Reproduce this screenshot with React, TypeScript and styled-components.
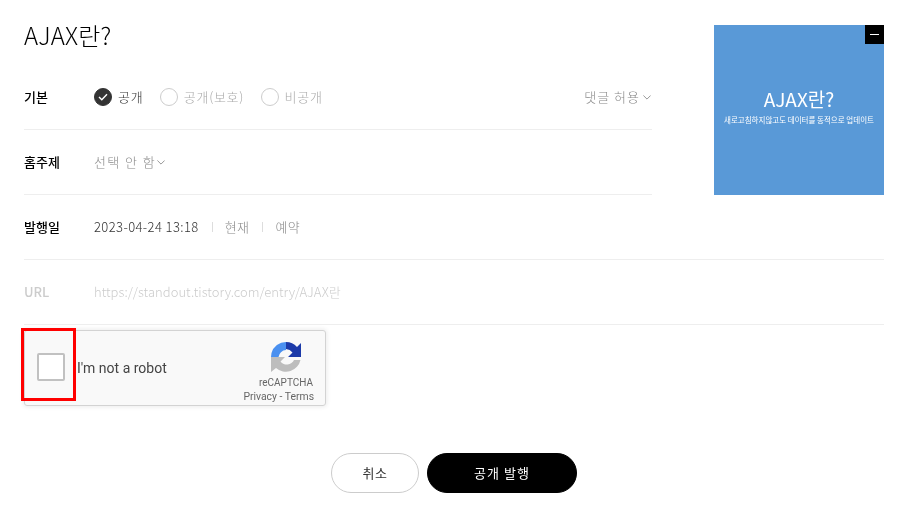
import React from 'react';
import styled, { createGlobalStyle } from 'styled-components';

const GlobalStyle = createGlobalStyle`
  html, body {
    margin: 0;
    padding: 0;
    background: #fff;
    font-family: 'Noto Sans CJK KR', 'Noto Sans', sans-serif;
    font-weight: 300;
  }
`;

const Page = styled.div`
  width: 899px;
  height: 509px;
  box-sizing: border-box;
  padding: 0 15px 0 24px;
  overflow: hidden;
  will-change: transform;
`;

const TopSection = styled.div`
  display: flex;
  justify-content: space-between;
  align-items: flex-start;
`;

const TopLeft = styled.div`
  width: 628px;
`;

const Title = styled.h1`
  margin: 0;
  height: 65px;
  padding-top: 19px;
  box-sizing: border-box;
  font-size: 24px;
  line-height: 32px;
  font-weight: 300;
  letter-spacing: 0.1px;
  color: #000;
`;

const Row = styled.div`
  display: flex;
  align-items: center;
  height: 65px;
  box-sizing: border-box;
  padding-bottom: 2px;
  border-bottom: 1px solid #eee;
`;

const Label = styled.div<{ $muted?: boolean }>`
  width: 70px;
  flex: none;
  font-size: 13px;
  font-weight: 500;
  color: ${(p) => (p.$muted ? '#ccc' : '#000')};
`;

const RadioGroup = styled.div`
  display: flex;
  align-items: center;
  flex: 1;
`;

const Radio = styled.div<{ $checked?: boolean }>`
  display: flex;
  align-items: center;
  gap: 6px;
  margin-right: 16.5px;
  font-size: 13px;
  color: ${(p) => (p.$checked ? '#333' : '#aaa')};
  letter-spacing: 0.7px;
`;

const RadioMark = styled.span<{ $checked?: boolean }>`
  width: 18px;
  height: 18px;
  margin-top: 2px;
  border-radius: 50%;
  box-sizing: border-box;
  display: flex;
  align-items: center;
  justify-content: center;
  background: ${(p) => (p.$checked ? '#333' : '#fff')};
  border: 1px solid ${(p) => (p.$checked ? '#333' : '#ccc')};
`;

const Select = styled.div<{ $wide?: boolean }>`
  display: flex;
  align-items: center;
  gap: ${(p) => (p.$wide ? '1px' : '3px')};
  padding-right: 1px;
  margin-left: ${(p) => (p.$wide ? '0' : '-1px')};
  font-size: 13px;
  letter-spacing: ${(p) => (p.$wide ? '1.4px' : '1px')};
  color: #888;

  svg {
    margin-top: 2px;
  }
`;

const DateText = styled.span`
  font-size: 13px;
  letter-spacing: 0.4px;
  color: #333;
`;

const DateAction = styled.span`
  font-size: 13px;
  color: #888;
  letter-spacing: 0.4px;
  margin-left: 13px;
  padding-left: 13px;
  position: relative;

  &::before {
    content: '';
    position: absolute;
    left: 0;
    top: 50%;
    width: 1px;
    height: 10px;
    margin-top: -4px;
    background: #ddd;
  }
`;

const UrlText = styled.span`
  font-size: 13px;
  letter-spacing: 0.03px;
  color: #ccc;
`;

const Thumb = styled.div`
  position: relative;
  margin-top: 25px;
  width: 170px;
  height: 170px;
  flex: none;
  background: #5999d7;
  color: #fff;
  display: flex;
  flex-direction: column;
  align-items: center;
  justify-content: center;
  padding-bottom: 8px;
  box-sizing: border-box;
`;

const ThumbTitle = styled.div`
  font-size: 19px;
  line-height: 26px;
  font-weight: 400;
`;

const ThumbSub = styled.div`
  font-size: 7.5px;
  line-height: 12px;
  font-weight: 400;
  margin-top: 2px;
  white-space: nowrap;
`;

const ThumbClose = styled.span`
  position: absolute;
  top: 0;
  right: 0;
  width: 19px;
  height: 19px;
  background: #000;

  &::after {
    content: '';
    position: absolute;
    left: 5px;
    top: 9px;
    width: 9px;
    height: 1px;
    background: #fff;
  }
`;

const CaptchaWrap = styled.div`
  position: relative;
  width: 302px;
  margin-top: 5px;
`;

const Captcha = styled.div`
  width: 302px;
  height: 76px;
  box-sizing: border-box;
  background: #f9f9f9;
  border: 1px solid #d3d3d3;
  border-radius: 3px;
  box-shadow: 0 0 4px 1px rgba(0, 0, 0, 0.08);
  display: flex;
  align-items: center;
  padding: 0 11px 2px 12px;
  font-family: Roboto, 'Liberation Sans', sans-serif;
  font-weight: 400;
`;

const CaptchaBox = styled.span`
  width: 28px;
  height: 28px;
  flex: none;
  box-sizing: border-box;
  background: #fff;
  border: 2px solid #c1c1c1;
  border-radius: 2px;
`;

const CaptchaLabel = styled.span`
  margin-left: 12px;
  margin-top: 2px;
  font-size: 14px;
  color: #444;
  flex: 1;
`;

const CaptchaBrand = styled.div`
  align-self: flex-start;
  margin-top: 10px;
  display: flex;
  flex-direction: column;
  align-items: flex-end;
  color: #666;
`;

const BrandLogo = styled.svg`
  display: block;
  margin-right: 12px;
`;

const BrandName = styled.span`
  font-size: 10px;
  line-height: 12px;
  margin-top: 4px;
  margin-right: 1px;
`;

const BrandLinks = styled.span`
  font-size: 10.4px;
  line-height: 12px;
  margin-top: 2px;
  white-space: nowrap;
`;

const Highlight = styled.div`
  position: absolute;
  left: -3px;
  top: -2px;
  width: 55px;
  height: 73px;
  box-sizing: border-box;
  border: 3px solid #f00;
`;

const Actions = styled.div`
  display: flex;
  justify-content: center;
  gap: 8px;
  margin-top: 47px;
`;

const Button = styled.button<{ $primary?: boolean }>`
  height: 40px;
  width: ${(p) => (p.$primary ? '150px' : '88px')};
  box-sizing: border-box;
  border-radius: 20px;
  font-family: inherit;
  font-size: 13px;
  font-weight: 400;
  padding: 0 0 2px;
  letter-spacing: ${(p) => (p.$primary ? '1px' : '0.5px')};
  color: ${(p) => (p.$primary ? '#fff' : '#333')};
  background: ${(p) => (p.$primary ? '#000' : '#fff')};
  border: 1px solid ${(p) => (p.$primary ? '#000' : '#ccc')};
`;

const CheckIcon = () => (
  <svg width="10" height="8" viewBox="0 0 10 8" fill="none">
    <path d="M1 4l2.8 2.8L9 1.2" stroke="#fff" strokeWidth="1.4" />
  </svg>
);

const Chevron = () => (
  <svg width="8" height="5" viewBox="0 0 8 5" fill="none">
    <path d="M.4.5L4 4.1 7.6.5" stroke="#999" strokeWidth="1" />
  </svg>
);

const RecaptchaLogo = () => (
  <BrandLogo width="32" height="32" viewBox="0 0 32 32">
    <path d="M16 1A15 15 0 0 0 1.5 12L1 16H8.5A8 8 0 0 1 16 9Z" fill="#4a90f0" />
    <path d="M16 1A15 15 0 0 1 27 6L31 2V16H18L22.5 11.5A9 9 0 0 0 16 8Z" fill="#1c3aa9" />
    <path d="M1 16H15L10.5 20.5A8 8 0 0 0 24 19L30.5 19A15 15 0 0 1 6 27L1 31Z" fill="#bdbdbd" />
  </BrandLogo>
);

export default function App() {
  return (
    <Page>
      <GlobalStyle />
      <TopSection>
        <TopLeft>
          <Title>AJAX란?</Title>
          <Row>
            <Label>기본</Label>
            <RadioGroup>
              <Radio $checked>
                <RadioMark $checked>
                  <CheckIcon />
                </RadioMark>
                공개
              </Radio>
              <Radio>
                <RadioMark />
                공개(보호)
              </Radio>
              <Radio>
                <RadioMark />
                비공개
              </Radio>
            </RadioGroup>
            <Select>
              댓글 허용
              <Chevron />
            </Select>
          </Row>
          <Row>
            <Label>홈주제</Label>
            <Select $wide>
              선택 안 함
              <Chevron />
            </Select>
          </Row>
        </TopLeft>
        <Thumb>
          <ThumbClose />
          <ThumbTitle>AJAX란?</ThumbTitle>
          <ThumbSub>새로고침하지않고도 데이터를 동적으로 업데이트</ThumbSub>
        </Thumb>
      </TopSection>
      <Row>
        <Label>발행일</Label>
        <DateText>2023-04-24 13:18</DateText>
        <DateAction>현재</DateAction>
        <DateAction>예약</DateAction>
      </Row>
      <Row>
        <Label $muted>URL</Label>
        <UrlText>https://standout.tistory.com/entry/AJAX란</UrlText>
      </Row>
      <CaptchaWrap>
        <Captcha>
          <CaptchaBox />
          <CaptchaLabel>I'm not a robot</CaptchaLabel>
          <CaptchaBrand>
            <RecaptchaLogo />
            <BrandName>reCAPTCHA</BrandName>
            <BrandLinks>Privacy - Terms</BrandLinks>
          </CaptchaBrand>
        </Captcha>
        <Highlight />
      </CaptchaWrap>
      <Actions>
        <Button>취소</Button>
        <Button $primary>공개 발행</Button>
      </Actions>
    </Page>
  );
}
